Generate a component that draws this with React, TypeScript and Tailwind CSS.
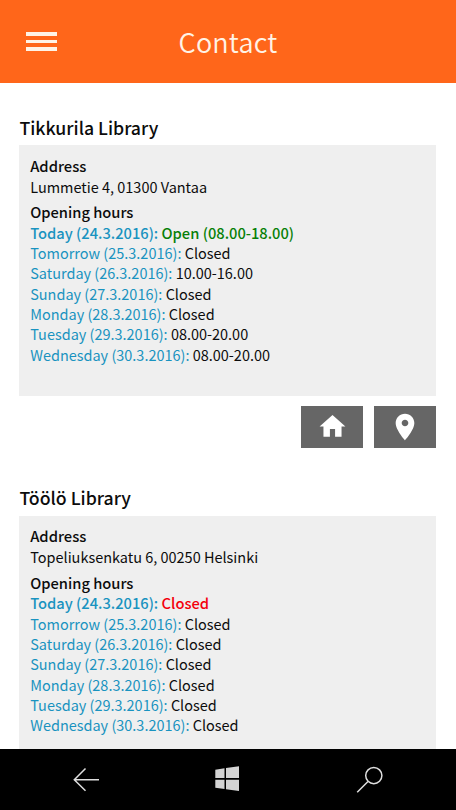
type Hours = { day: string; value: string };
type Library = {
  name: string;
  address: string;
  today: string;
  open: boolean;
  hours: Hours[];
};

const libraries: Library[] = [
  {
    name: 'Tikkurila Library',
    address: 'Lummetie 4, 01300 Vantaa',
    today: 'Open (08.00-18.00)',
    open: true,
    hours: [
      { day: 'Tomorrow (25.3.2016):', value: 'Closed' },
      { day: 'Saturday (26.3.2016):', value: '10.00-16.00' },
      { day: 'Sunday (27.3.2016):', value: 'Closed' },
      { day: 'Monday (28.3.2016):', value: 'Closed' },
      { day: 'Tuesday (29.3.2016):', value: '08.00-20.00' },
      { day: 'Wednesday (30.3.2016):', value: '08.00-20.00' },
    ],
  },
  {
    name: 'Töölö Library',
    address: 'Topeliuksenkatu 6, 00250 Helsinki',
    today: 'Closed',
    open: false,
    hours: [
      { day: 'Tomorrow (25.3.2016):', value: 'Closed' },
      { day: 'Saturday (26.3.2016):', value: 'Closed' },
      { day: 'Sunday (27.3.2016):', value: 'Closed' },
      { day: 'Monday (28.3.2016):', value: 'Closed' },
      { day: 'Tuesday (29.3.2016):', value: 'Closed' },
      { day: 'Wednesday (30.3.2016):', value: 'Closed' },
    ],
  },
];

function LibrarySection({ library }: { library: Library }) {
  return (
    <section className="flex h-[370.5px] shrink-0 flex-col">
      <h2 className="h-[34.5px] text-[17.7px] leading-[33px] font-medium">{library.name}</h2>
      <div className="h-[251px] shrink-0 bg-[#efefef] pt-[10.5px] pl-[10.8px] text-[14.48px] leading-[20.35px] whitespace-nowrap">
        <h3 className="text-[14.75px] leading-[20px] font-medium">Address</h3>
        <p className="mt-[1.2px]">{library.address}</p>
        <h3 className="mt-[5.4px] text-[14.7px] font-medium">Opening hours</h3>
        <p className="text-[14.7px] font-medium">
          <span className="text-[#1993c0]">Today (24.3.2016):</span>{' '}
          <span className={library.open ? 'text-[#078007]' : 'text-[#f4000c]'}>{library.today}</span>
        </p>
        {library.hours.map((row) => (
          <p key={row.day}>
            <span className="text-[#1993c0]">{row.day}</span> {row.value}
          </p>
        ))}
      </div>
      <div className="mt-[10px] flex justify-end gap-[11px]">
        <button className="flex h-[41.5px] w-[62px] items-center justify-center bg-[#666666]" aria-label="Home page">
          <svg viewBox="0 0 24 24" className="h-[31px] w-[31px] fill-white">
            <path d="M10 20v-6h4v6h5v-8h3L12 3 2 12h3v8z" />
          </svg>
        </button>
        <button className="flex h-[41.5px] w-[62px] items-center justify-center bg-[#666666]" aria-label="Location">
          <svg viewBox="0 0 24 24" className="h-[32px] w-[32px] fill-white">
            <path d="M12 2C8.13 2 5 5.13 5 9c0 5.25 7 13 7 13s7-7.75 7-13c0-3.87-3.13-7-7-7zm0 9.5c-1.38 0-2.5-1.12-2.5-2.5s1.12-2.5 2.5-2.5 2.5 1.12 2.5 2.5-1.12 2.5-2.5 2.5z" />
          </svg>
        </button>
      </div>
    </section>
  );
}

export default function App() {
  return (
    <div className="flex h-[810px] w-[456px] flex-col overflow-hidden bg-white font-['Noto_Sans_CJK_SC','Noto_Sans',sans-serif] text-[#0c0c0c]">
      <header className="grid h-[83px] shrink-0 grid-cols-[1fr_auto_1fr] items-center bg-[#ff661a] text-[#fff3e6]">
        <button className="ml-[26px] flex w-[31px] flex-col gap-[4px]" aria-label="Menu">
          <span className="h-[3.5px] w-full bg-[#fff3e6]" />
          <span className="h-[3.5px] w-full bg-[#fff3e6]" />
          <span className="h-[3.5px] w-full bg-[#fff3e6]" />
        </button>
        <h1 className="text-[27px] leading-[36px] font-[350] tracking-[0.2px]">Contact</h1>
      </header>
      <main className="flex min-h-0 flex-1 flex-col overflow-hidden pt-[27.5px] pr-[19.6px] pl-[19.4px]">
        {libraries.map((library) => (
          <LibrarySection key={library.name} library={library} />
        ))}
      </main>
      <nav className="grid h-[61px] shrink-0 grid-cols-3 bg-black">
        <svg viewBox="60 749 100 61" className="ml-[60px] h-[61px] w-[100px]" fill="none" stroke="#dedede" strokeWidth="1.5">
          <path d="M99 779.7H74.5M85.5 768.5L74.3 779.7l11.2 11" />
        </svg>
        <svg viewBox="200 749 60 61" className="ml-[48px] h-[61px] w-[60px] fill-[#d4d4d4]">
          <path d="M215.3 769.7l9.2-1.4v9.6h-9.2zM226 768.1l13-1.9v11.7h-13zM215.3 779.7h9.2v9.4l-9.2-1.3zM226 779.7h13v11.4l-13-1.9z" />
        </svg>
        <svg viewBox="340 749 60 61" className="ml-[36px] h-[61px] w-[60px]" fill="none" stroke="#dedede" strokeWidth="1.5">
          <circle cx="373.8" cy="775.6" r="8.1" />
          <path d="M368 781.5L357.2 792.2" />
        </svg>
      </nav>
    </div>
  );
}
